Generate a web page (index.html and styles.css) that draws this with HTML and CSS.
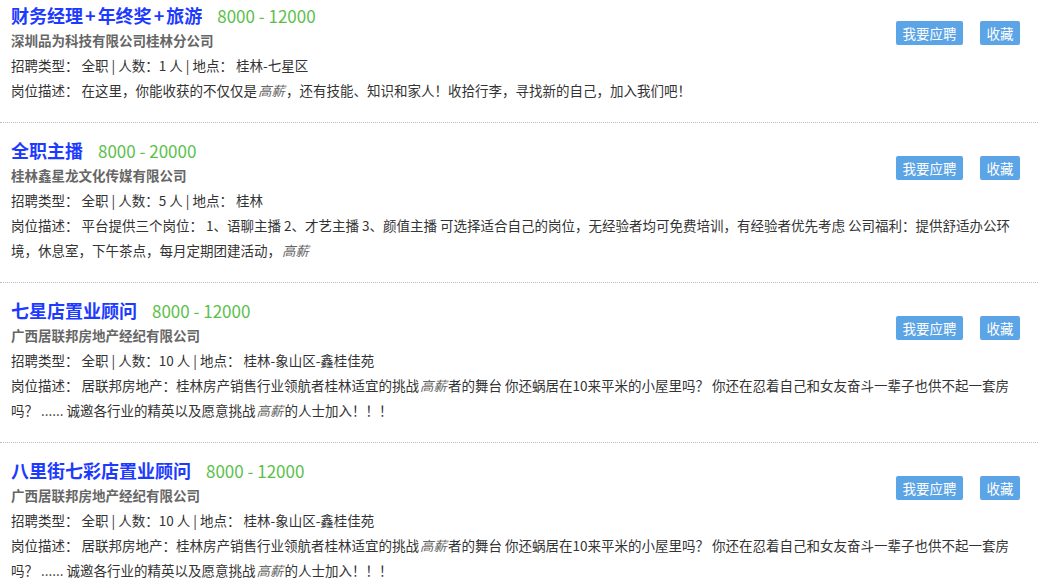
FILE: index.html
```html
<!DOCTYPE html>
<html lang="zh-CN">

<head>
    <meta charset="UTF-8">
    <meta name="viewport" content="width=device-width, initial-scale=1.0">
    <title>职位列表</title>
    <link rel="stylesheet" href="styles.css">
</head>

<body>
    <div id="lista">

        <div class="vaga">
            <div class="acoes">
                <button class="btn">我要应聘</button>
                <button class="btn">收藏</button>
            </div>
            <div class="titulo">财务经理<span class="mais">+</span>年终奖<span class="mais">+</span>旅游<span class="salario">8000 - 12000</span></div>
            <div class="empresa">深圳品为科技有限公司桂林分公司</div>
            <div class="info">招聘类型： 全职 | 人数：1 人 | 地点： 桂林-七星区</div>
            <div class="desc">岗位描述： 在这里，你能收获的不仅仅是<em>高薪</em>，还有技能、知识和家人！收拾行李，寻找新的自己，加入我们吧！</div>
        </div>

        <div class="vaga">
            <div class="acoes">
                <button class="btn">我要应聘</button>
                <button class="btn">收藏</button>
            </div>
            <div class="titulo">全职主播<span class="salario">8000 - 20000</span></div>
            <div class="empresa">桂林鑫星龙文化传媒有限公司</div>
            <div class="info">招聘类型： 全职 | 人数：5 人 | 地点： 桂林</div>
            <div class="desc">岗位描述： 平台提供三个岗位： 1、语聊主播 2、才艺主播 3、颜值主播 可选择适合自己的岗位，无经验者均可免费培训，有经验者优先考虑 公司福利：提供舒适办公环境，休息室，下午茶点，每月定期团建活动，<em>高薪</em></div>
        </div>

        <div class="vaga">
            <div class="acoes">
                <button class="btn">我要应聘</button>
                <button class="btn">收藏</button>
            </div>
            <div class="titulo">七星店置业顾问<span class="salario">8000 - 12000</span></div>
            <div class="empresa">广西居联邦房地产经纪有限公司</div>
            <div class="info">招聘类型： 全职 | 人数：10 人 | 地点： 桂林-象山区-鑫桂佳苑</div>
            <div class="desc">岗位描述： 居联邦房地产：桂林房产销售行业领航者桂林适宜的挑战<em>高薪</em>者的舞台 你还蜗居在10来平米的小屋里吗？ 你还在忍着自己和女友奋斗一辈子也供不起一套房吗？ ...... 诚邀各行业的精英以及愿意挑战<em>高薪</em>的人士加入！！！</div>
        </div>

        <div class="vaga">
            <div class="acoes">
                <button class="btn">我要应聘</button>
                <button class="btn">收藏</button>
            </div>
            <div class="titulo">八里街七彩店置业顾问<span class="salario">8000 - 12000</span></div>
            <div class="empresa">广西居联邦房地产经纪有限公司</div>
            <div class="info">招聘类型： 全职 | 人数：10 人 | 地点： 桂林-象山区-鑫桂佳苑</div>
            <div class="desc">岗位描述： 居联邦房地产：桂林房产销售行业领航者桂林适宜的挑战<em>高薪</em>者的舞台 你还蜗居在10来平米的小屋里吗？ 你还在忍着自己和女友奋斗一辈子也供不起一套房吗？ ...... 诚邀各行业的精英以及愿意挑战<em>高薪</em>的人士加入！！！</div>
        </div>

    </div>
</body>

</html>
```

FILE: styles.css
```css
body {
    font-family: "Noto Sans CJK SC", "Noto Sans", sans-serif;
    background-color: #fff;
    color: #333;
    margin: 0;
    padding: 0;
    overflow: hidden;
}

#lista {
    margin-top: -12px;
}

.vaga {
    padding: 15px 18px 19px 11px;
    border-bottom: 1px dotted #bbb;
}

.acoes {
    float: right;
    display: flex;
    gap: 17px;
    margin-top: 18px;
}

.btn {
    height: 24px;
    padding: 0 6.5px;
    background-color: #5ba4e5;
    color: white;
    font-family: inherit;
    font-size: 13.5px;
    line-height: 24px;
    border: none;
    border-radius: 2px;
    cursor: pointer;
}

.titulo {
    font-size: 18px;
    font-weight: bold;
    line-height: 24px;
    color: #1d3bff;
}

.mais {
    margin: 0 2px;
}

.salario {
    margin-left: 15px;
    font-size: 17px;
    font-weight: normal;
    color: #5cbf4c;
}

.empresa {
    font-size: 13.5px;
    font-weight: bold;
    line-height: 25px;
    color: #666;
}

.info,
.desc {
    font-size: 13.5px;
    line-height: 25px;
}

.desc em {
    padding: 0 1px;
    color: #666;
}
```
